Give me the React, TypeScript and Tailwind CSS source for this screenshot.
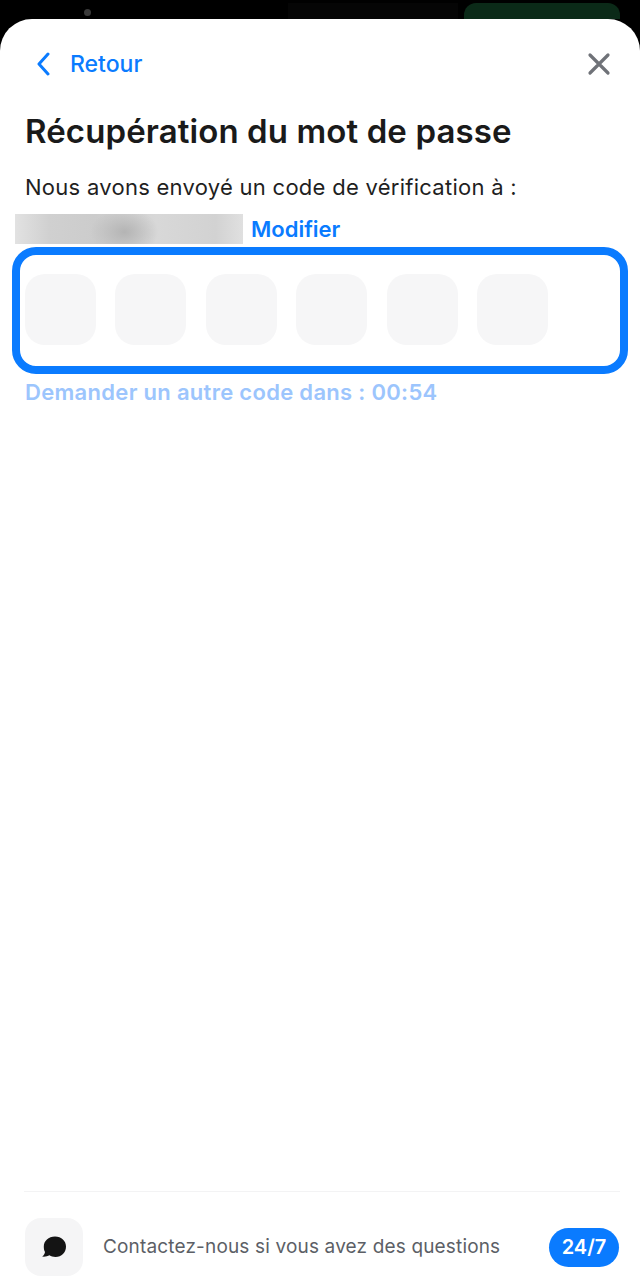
import React from "react";

const cells = [0, 1, 2, 3, 4, 5];

export default function App() {
  return (
    <div className="w-[640px] h-[1280px] bg-black overflow-hidden flex flex-col font-['Inter','Liberation_Sans',sans-serif]">
      <div className="h-[19px] shrink-0 flex items-start">
        <div className="w-[7px] h-[7px] rounded-full bg-[#3a3a3a] mt-[9px] ml-[84px]" />
        <div className="w-[170px] h-[16px] bg-[#050505] mt-[3px] ml-[197px]" />
        <div className="w-[156px] h-[16px] rounded-t-[12px] bg-[#0b2a18] mt-[3px] ml-[6px]" />
      </div>
      <div className="flex-1 bg-white rounded-t-[32px] flex flex-col">
        <div className="flex items-center justify-between pl-[36px] pr-[29px] pt-[30px] h-[60px]">
          <div className="flex items-center gap-[19px]">
            <svg width="15" height="24" viewBox="0 0 15 24" fill="none" stroke="#0a7bff" strokeWidth="3" strokeLinecap="round" strokeLinejoin="round">
              <path d="M12 2 L3 12 L12 22" />
            </svg>
            <span className="text-[23px] leading-[30px] font-medium text-[#0a7bff]">Retour</span>
          </div>
          <svg width="24" height="24" viewBox="0 0 24 24" fill="none" stroke="#6f7278" strokeWidth="3.2" strokeLinecap="round">
            <path d="M3 3 L21 21 M21 3 L3 21" />
          </svg>
        </div>
        <h1 className="mt-[30px] ml-[25px] text-[33px] leading-[44px] font-semibold tracking-[0.1px] text-[#1a1a1a]">Récupération du mot de passe</h1>
        <p className="mt-[19px] ml-[25px] text-[22px] leading-[30px] tracking-[0.27px] text-[#1f1f1f]">Nous avons envoyé un code de vérification à :</p>
        <div className="mt-[12px] ml-[15px] flex items-center gap-[8px] h-[30px]">
          <div className="w-[228px] h-[30px] bg-[radial-gradient(ellipse_34px_24px_at_48%_60%,#b4b4b4_0%,rgba(180,180,180,0)_100%),linear-gradient(90deg,#e2e2e2_0%,#d0d0d0_15%,#cccccc_35%,#d8d8d8_62%,#d2d2d2_88%,#e0e0e0_100%)]" />
          <span className="text-[22px] leading-[30px] font-semibold text-[#0a7bff]">Modifier</span>
        </div>
        <div className="mt-[3px] ml-[12px] w-[616px] h-[127px] border-[8px] border-[#0a7bff] rounded-[24px] flex gap-[19.4px] pl-[5px] pt-[19px]">
          {cells.map((c) => (
            <div key={c} className="w-[71px] h-[71px] rounded-[20px] bg-[#f6f6f7]" />
          ))}
        </div>
        <p className="mt-[3px] ml-[25px] text-[22px] leading-[30px] tracking-[0.3px] font-semibold text-[#9cc5fd]">Demander un autre code dans : 00:54</p>
        <div className="flex-1" />
        <div className="ml-[24px] mr-[20px] border-t border-[#f3f3f4] pt-[26px] pb-[4px] flex items-center">
          <div className="w-[58px] h-[58px] ml-[1px] rounded-[16px] bg-[#f5f5f6] flex items-center justify-center">
            <svg width="26" height="24" viewBox="0 0 26 24" fill="#141414">
              <path d="M14 1.5 C20.5 1.5 25 6 25 11.5 C25 17.5 20.5 22 14.5 22 C12 22 10 21.3 8.5 20.3 C6.5 21.5 3.5 22 1 21.6 C2.8 20.4 3.8 18.8 4 17 C3 15.4 2.8 13.5 2.8 11.5 C2.8 6 7.5 1.5 14 1.5 Z" />
            </svg>
          </div>
          <span className="ml-[20px] text-[19px] leading-[26px] tracking-[0.16px] text-[#5c5f66]">Contactez-nous si vous avez des questions</span>
          <div className="ml-auto w-[70px] h-[39px] rounded-full bg-[#0a7bff] flex items-center justify-center mr-[1px]">
            <span className="text-[20px] font-semibold text-white">24/7</span>
          </div>
        </div>
      </div>
    </div>
  );
}
